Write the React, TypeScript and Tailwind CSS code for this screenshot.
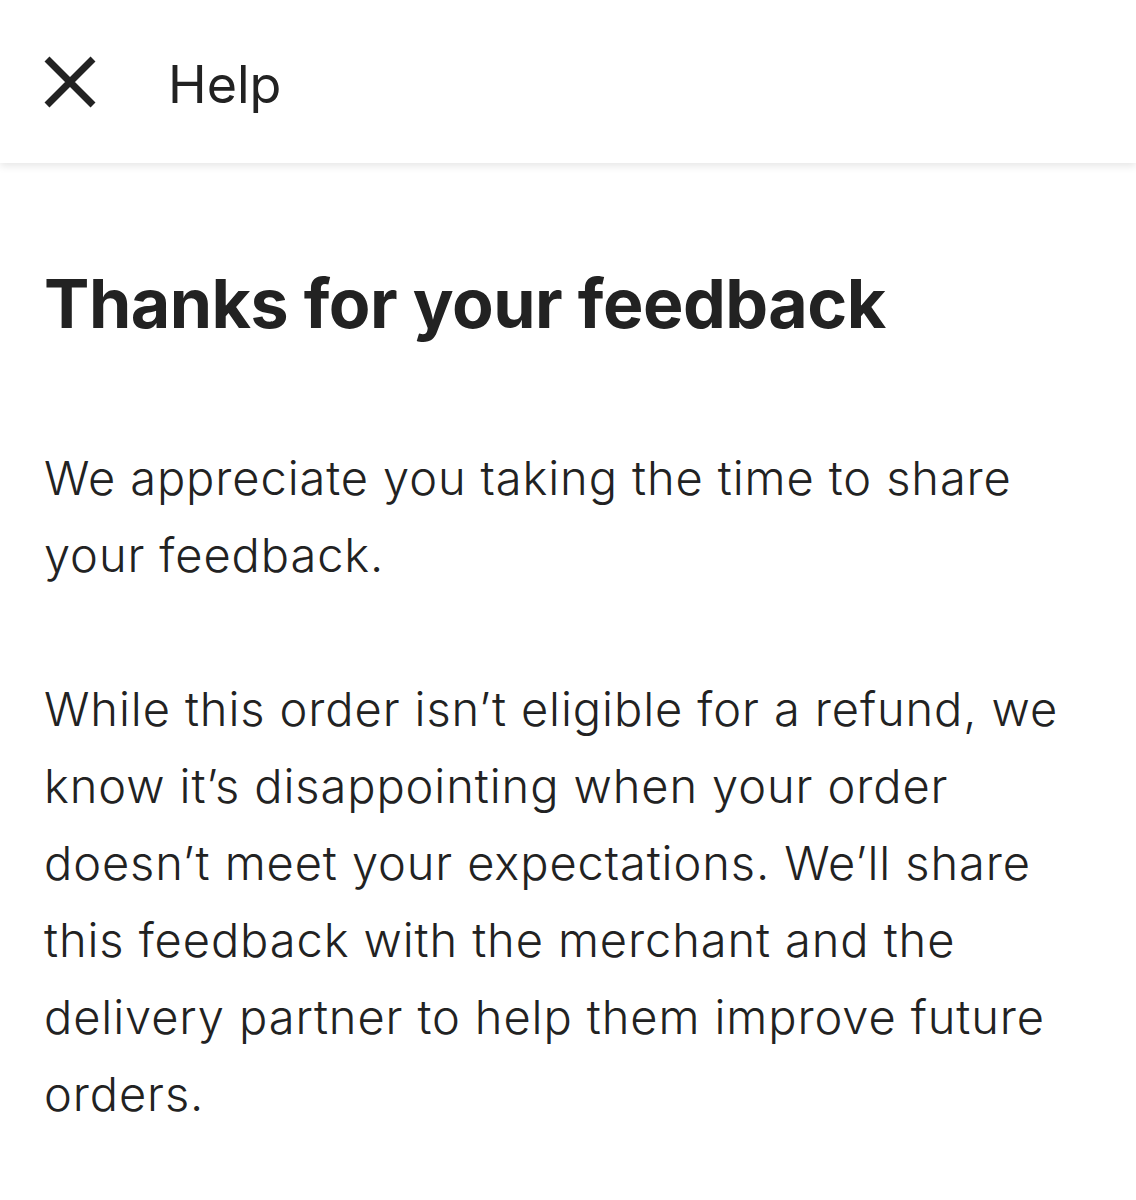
import React from "react";

export default function App() {
  const p1 = ["We appreciate you taking the time to share", "your feedback."];
  const p2 = [
    "While this order isn\u2019t eligible for a refund, we",
    "know it\u2019s disappointing when your order",
    "doesn\u2019t meet your expectations. We\u2019ll share",
    "this feedback with the merchant and the",
    "delivery partner to help them improve future",
    "orders.",
  ];
  return (
    <div className="w-[1136px] h-[1200px] bg-white overflow-hidden" style={{ fontFamily: "Inter, 'Noto Sans', sans-serif" }}>
      <header className="relative h-[163px] flex items-center pl-[44px] bg-white shadow-[0_3px_8px_rgba(0,0,0,0.10)]">
        <svg width="52" height="52" viewBox="0 0 52 52" className="shrink-0">
          <path d="M3 3 L49 49 M49 3 L3 49" stroke="#222" strokeWidth="7" fill="none" />
        </svg>
        <span className="ml-[72px] text-[52px] leading-none text-[#222] mt-[6px]">Help</span>
      </header>
      <main className="px-[44px] text-[#222]">
        <h1 className="mt-[100px] text-[68px] leading-[80px] font-bold tracking-[-0.5px]">Thanks for your feedback</h1>
        <div className="mt-[96px] text-[47px] leading-[77px] tracking-[0.9px] font-light">
          {p1.map((l) => (
            <div key={l} className="whitespace-nowrap">{l}</div>
          ))}
          <div className="h-[77px]" />
          {p2.map((l) => (
            <div key={l} className="whitespace-nowrap">{l}</div>
          ))}
        </div>
      </main>
    </div>
  );
}
